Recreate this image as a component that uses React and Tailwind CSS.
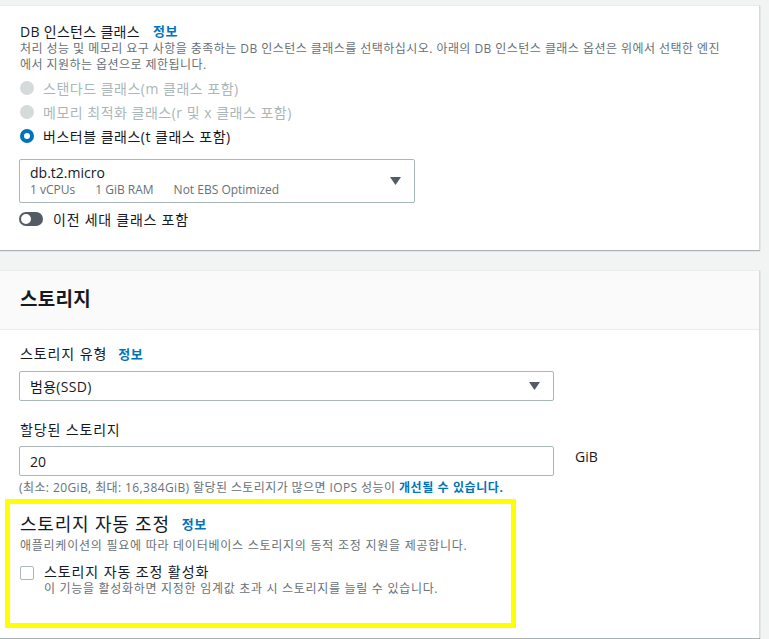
import React from 'react';

const font = "font-['Open_Sans','Noto_Sans_CJK_KR',sans-serif]";

function Info({ className = 'ml-[13px]' }) {
  return <span className={`text-[#0073bb] font-bold text-[13px] tracking-[0.5px] ${className}`}>정보</span>;
}

function Caret() {
  return (
    <svg width="11" height="8" viewBox="0 0 11 8">
      <path d="M0 0 H11 L5.5 8 Z" fill="#545b64" />
    </svg>
  );
}

function Radio({ state, children }) {
  const disabled = state === 'disabled';
  return (
    <div className="flex items-center h-6">
      {disabled ? (
        <span className="w-[14px] h-[14px] rounded-full bg-[#d5dbdb] ml-[1px]" />
      ) : (
        <span className="w-[14px] h-[14px] rounded-full border-[4px] border-[#0073bb] bg-white ml-[1px]" />
      )}
      <span className={`ml-[9px] text-[14px] tracking-[0.5px] ${disabled ? 'text-[#aab7b8]' : 'text-[#16191f]'}`}>{children}</span>
    </div>
  );
}

export default function App() {
  return (
    <div className={`${font} bg-[#f2f3f3] w-[769px] h-[639px] overflow-hidden text-[#16191f]`}>
      {/* 인스턴스 클래스 카드 */}
      <div className="mt-[5px] w-[760px] bg-white border-t border-[#eaeded] border-r border-r-[#d5dbdb] shadow-[0_1px_1px_0_rgba(0,28,36,0.3)] pl-[19px] pt-[16px] pb-[21px]">
        <div className="flex items-center text-[14px] leading-[19px] pl-px tracking-[0.3px]">
          DB 인스턴스 클래스 <Info />
        </div>
        <div className="text-[12px] leading-4 text-[#687078] pl-px whitespace-nowrap tracking-[0.45px]">
          처리 성능 및 메모리 요구 사항을 충족하는 DB 인스턴스 클래스를 선택하십시오. 아래의 DB 인스턴스 클래스 옵션은 위에서 선택한 엔진
          <br />
          에서 지원하는 옵션으로 제한됩니다.
        </div>
        <div className="mt-[3px]">
          <Radio state="disabled">스탠다드 클래스(m 클래스 포함)</Radio>
          <Radio state="disabled">메모리 최적화 클래스(r 및 x 클래스 포함)</Radio>
          <Radio state="on">버스터블 클래스(t 클래스 포함)</Radio>
        </div>
        <div className="mt-[11px] w-[396px] h-[44px] border border-[#aab7b8] rounded-[2px] flex items-center justify-between pl-[10px] pr-[13px]">
          <div>
            <div className="text-[14px] leading-[18px]">db.t2.micro</div>
            <div className="text-[12px] leading-[16px] text-[#687078] flex gap-[20px] whitespace-nowrap">
              <span>1 vCPUs</span>
              <span>1 GiB RAM</span>
              <span>Not EBS Optimized</span>
            </div>
          </div>
          <Caret />
        </div>
        <div className="mt-[6px] flex items-center h-5">
          <span className="w-[24px] h-[14px] rounded-full bg-[#545b64] flex items-center pl-[2px]">
            <span className="w-[10px] h-[10px] rounded-full bg-white" />
          </span>
          <span className="ml-[10px] text-[14px] tracking-[0.75px]">이전 세대 클래스 포함</span>
        </div>
      </div>

      {/* 스토리지 카드 */}
      <div className="mt-[20px] w-[760px] bg-white border-t border-[#eaeded] border-r border-r-[#d5dbdb] shadow-[0_1px_1px_0_rgba(0,28,36,0.3)]">
        <div className="h-[59px] bg-[#fafafa] border-b border-[#eaeded] flex items-center pl-5">
          <h2 className="text-[19px] font-bold leading-6 mb-[2px] tracking-[0.3px]">스토리지</h2>
        </div>
        <div className="pl-[19px] pt-[14px] pb-[10px]">
          <div className="flex items-center text-[14px] leading-5 pl-px tracking-[0.9px]">
            스토리지 유형 <Info className="ml-[11px]" />
          </div>
          <div className="mt-[7px] w-[535px] h-[30px] border border-[#aab7b8] rounded-[2px] flex items-center justify-between pl-[10px] pr-[13px]">
            <span className="text-[14px] tracking-[0.3px]">범용(SSD)</span>
            <Caret />
          </div>
          <div className="mt-[19px] text-[14px] leading-5 pl-px tracking-[0.85px]">할당된 스토리지</div>
          <div className="mt-[6px] flex items-start">
            <div className="w-[535px] h-[30px] border border-[#aab7b8] rounded-[2px] flex items-center pl-[10px] text-[14px]">20</div>
            <span className="ml-[21px] mt-[1px] text-[14px] leading-5">GiB</span>
          </div>
          <div className="mt-[4px] text-[12px] leading-4 text-[#687078] whitespace-nowrap tracking-[0.4px]">
            (최소: 20GiB, 최대: 16,384GiB) 할당된 스토리지가 많으면 IOPS 성능이{' '}
            <span className="text-[#0073bb] font-bold tracking-[0.6px]">개선될 수 있습니다.</span>
          </div>
          <div className="mt-[3px] -ml-[14px] w-[511px] h-[129px] border-[5px] border-[#ffff00] pl-[10px] pt-[8px]">
            <div className="flex items-center text-[18px] leading-6 tracking-[0.8px]">
              스토리지 자동 조정 <Info className="ml-[12px]" />
            </div>
            <div className="mt-[2px] text-[12px] leading-4 text-[#687078] whitespace-nowrap tracking-[0.75px]">
              애플리케이션의 필요에 따라 데이터베이스 스토리지의 동적 조정 지원을 제공합니다.
            </div>
            <div className="mt-[9px] flex">
              <span className="mt-[3px] w-[14px] h-[14px] border border-[#aab7b8] rounded-[2px] bg-white" />
              <div className="ml-[10px]">
                <div className="text-[14px] leading-[18px] tracking-[0.9px]">스토리지 자동 조정 활성화</div>
                <div className="text-[12px] leading-4 text-[#687078] whitespace-nowrap tracking-[0.7px]">
                  이 기능을 활성화하면 지정한 임계값 초과 시 스토리지를 늘릴 수 있습니다.
                </div>
              </div>
            </div>
          </div>
        </div>
      </div>
    </div>
  );
}
